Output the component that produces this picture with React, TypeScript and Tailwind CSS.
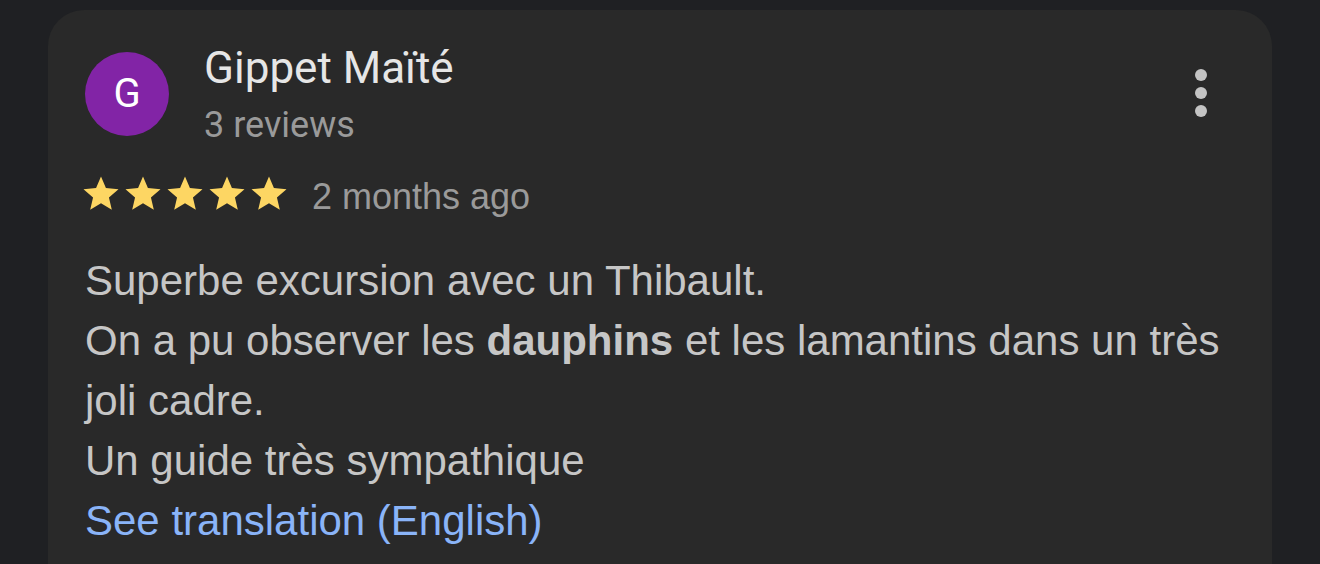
export default function App() {
  return (
    <div className="h-[564px] w-[1320px] bg-[#1f2023] pt-[10px] pl-[48px] overflow-hidden">
      <div className="w-[1224px] h-[600px] rounded-[36px] bg-[#292929] pt-[42px] pl-[37px] font-['Liberation_Sans',sans-serif]">
        <div className="flex items-start pr-[55px]">
          <div className="w-[84px] h-[84px] rounded-full bg-[#8224a6] flex items-center justify-center text-white text-[40px] font-['Roboto',sans-serif]">
            G
          </div>
          <div className="ml-[35px] flex-1 font-['Roboto',sans-serif]">
            <div className="text-[44px] leading-[50px] text-[#e6e6e6] -mt-[9px]">Gippet Maïté</div>
            <div className="text-[36px] leading-[44px] text-[#9a9a9a] mt-[10px]">3 reviews</div>
          </div>
          <button className="mt-[17px] flex flex-col gap-[6px] items-center px-[10px]">
            <span className="w-[12px] h-[12px] rounded-full bg-[#c4c4c4]" />
            <span className="w-[12px] h-[12px] rounded-full bg-[#c4c4c4]" />
            <span className="w-[12px] h-[12px] rounded-full bg-[#c4c4c4]" />
          </button>
        </div>

        <div className="flex items-center h-[54px] mt-[20px] -ml-[5px]">
          <div className="flex">
            {[0, 1, 2, 3, 4].map((i) => (
              <svg key={i} viewBox="0 0 24 24" className="w-[42px] h-[42px]">
                <path
                  fill="#fdd663"
                  d="M12 17.27L18.18 21l-1.64-7.03L22 9.24l-7.19-.61L12 2 9.19 8.63 2 9.24l5.46 4.73L5.82 21z"
                />
              </svg>
            ))}
          </div>
          <span className="ml-[22px] mt-[6px] text-[36px] leading-[48px] text-[#9a9a9a]">2 months ago</span>
        </div>

        <div className="mt-[30px] text-[42px] leading-[60px] text-[#c6c6c6] w-[1160px]">
          <p>Superbe excursion avec un Thibault.</p>
          <p>
            On a pu observer les <b className="font-bold">dauphins</b> et les lamantins dans un très joli cadre.
          </p>
          <p>Un guide très sympathique</p>
          <p className="text-[#8ab4f8]">See translation (English)</p>
        </div>
      </div>
    </div>
  );
}
